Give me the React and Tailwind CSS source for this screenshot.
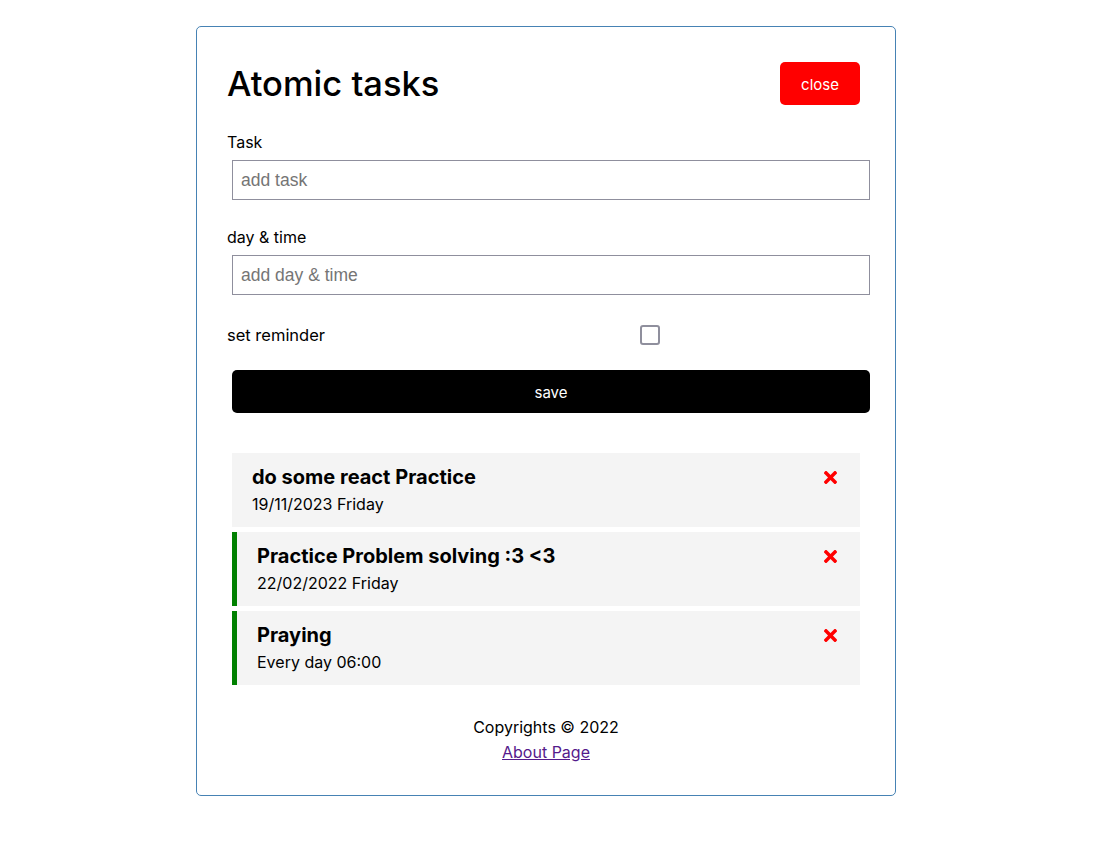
import { FaTimes } from "react-icons/fa";

const tasks = [
  { id: 1, text: "do some react Practice", day: "19/11/2023 Friday", reminder: false },
  { id: 2, text: "Practice Problem solving :3 <3", day: "22/02/2022 Friday", reminder: true },
  { id: 3, text: "Praying", day: "Every day 06:00", reminder: true },
];

const Task = ({ task }) => (
  <div
    className={`bg-[#f4f4f4] mx-[5px] py-[10px] px-[20px] ${
      task.reminder ? "border-l-[5px] border-l-[#008000]" : ""
    }`}
  >
    <h3 className="flex items-center justify-between text-[20px] font-bold leading-[29px]">
      {task.text}
      <FaTimes className="text-[#ff0000] cursor-pointer" size={19} />
    </h3>
    <p className="text-[16px] leading-[25px]">{task.day}</p>
  </div>
);

export default function App() {
  return (
    <div className="bg-white min-h-screen pt-[26px] pr-[3px] font-[Inter,sans-serif] text-black">
      <div className="w-[700px] mx-auto border border-[#4682b4] rounded-[5px] p-[30px]">
        <header className="flex items-center justify-between mb-[20px]">
          <h1 className="text-[34.5px] font-medium leading-[48px]">Atomic tasks</h1>
          <button className="m-[5px] w-[80px] h-[43px] pt-[3px] bg-[#ff0000] text-white text-[15px] rounded-[5px]">
            close
          </button>
        </header>

        <form>
          <div className="mb-[25px]">
            <label className="block text-[16px] leading-[25px]">Task</label>
            <input
              type="text"
              placeholder="add task"
              className="block w-full h-[40px] m-[5px] px-[8px] border border-[#8f8f9d] text-[17.5px] font-['Liberation_Sans',Arial,sans-serif] placeholder:text-[#757575] outline-none"
            />
          </div>
          <div className="mb-[25px]">
            <label className="block text-[16px] leading-[25px]">day &amp; time</label>
            <input
              type="text"
              placeholder="add day & time"
              className="block w-full h-[40px] m-[5px] px-[8px] border border-[#8f8f9d] text-[17.5px] font-['Liberation_Sans',Arial,sans-serif] placeholder:text-[#757575] outline-none"
            />
          </div>
          <div className="flex items-center h-[30px] mb-[20px]">
            <label className="flex-1 text-[16.5px]">set reminder</label>
            <div className="flex-[2] flex justify-center">
              <span className="block w-[20px] h-[20px] border-2 border-[#8f8f9d] rounded-[3px] mr-[4px]" />
            </div>
          </div>
          <button
            type="button"
            className="block w-full h-[43px] pt-[3px] ml-[5px] bg-black text-white text-[15px] rounded-[5px]"
          >
            save
          </button>
        </form>

        <div className="mt-[40px] flex flex-col gap-[5px]">
          {tasks.map((t) => (
            <Task key={t.id} task={t} />
          ))}
        </div>

        <footer className="mt-[30px] text-center text-[16px] leading-[25px]">
          <p>Copyrights © 2022</p>
          <a href="#" className="text-[#551a8b] underline">
            About Page
          </a>
        </footer>
      </div>
    </div>
  );
}
